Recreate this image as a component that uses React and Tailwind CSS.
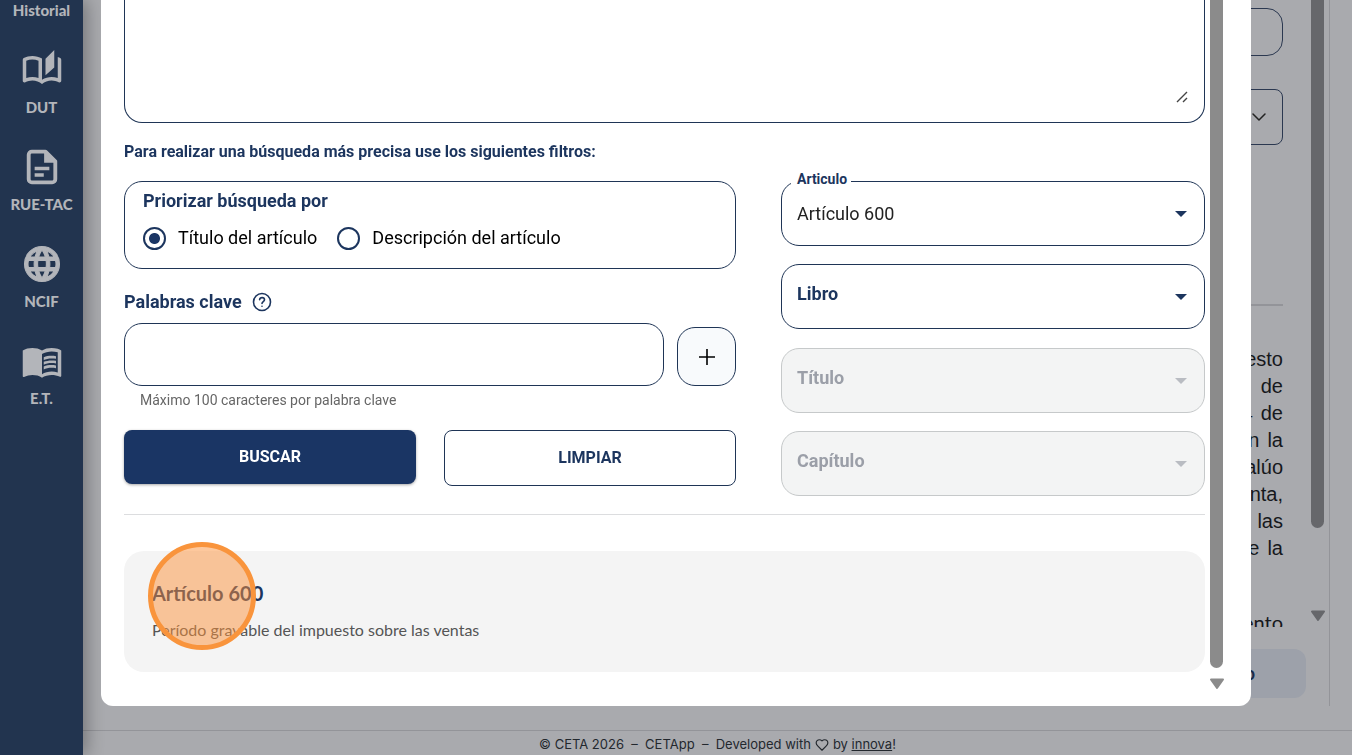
import { useState } from "react";
import { MdOutlineAutoStories, MdLanguage, MdMenuBook } from "react-icons/md";
import { LuChevronDown, LuHeart } from "react-icons/lu";

function FileIcon({ className }) {
  return (
    <svg viewBox="0 0 24 24" fill="none" className={className}>
      <path
        d="M14 3.2H6.2A1.8 1.8 0 0 0 4.4 5v14a1.8 1.8 0 0 0 1.8 1.8h11.6a1.8 1.8 0 0 0 1.8-1.8V8.8Z"
        stroke="currentColor"
        strokeWidth="2.2"
        strokeLinejoin="round"
      />
      <path d="M13.2 3v6.6h6.6Z" fill="currentColor" />
      <path d="M7.8 12.8h8.4M7.8 16.6h5.2" stroke="currentColor" strokeWidth="2" />
    </svg>
  );
}

function HelpIcon({ className }) {
  return (
    <svg
      viewBox="0 0 20 20"
      fill="none"
      stroke="currentColor"
      strokeWidth="1.6"
      strokeLinecap="round"
      strokeLinejoin="round"
      className={className}
    >
      <circle cx="10" cy="10" r="8.5" />
      <path d="M7.6 7.7c.2-1.4 1.2-2.1 2.5-2.1 1.4 0 2.4.8 2.4 2.1 0 1.8-2.5 1.900-2.5 3.800M10 14.200v.1" />
    </svg>
  );
}

const menu = [
  { name: "DUT", icon: MdOutlineAutoStories, iconClass: "size-[42px]" },
  { name: "RUE-TAC", icon: FileIcon, iconClass: "size-[42px]" },
  {
    name: "NCIF",
    icon: MdLanguage,
    iconClass: "size-[42px] [stroke-width:0.6] [&>path[fill=none]]:stroke-none",
  },
  { name: "E.T.", icon: MdMenuBook, iconClass: "size-[42px]" },
];

const articleLines = ["impuesto", "de", "4 de", "en la", "avalúo", "renta,", "las", "de la"];

function Sidebar() {
  return (
    <nav className="w-[83px] shrink-0 bg-[#22344f] text-[#b3b5ba] shadow-[4px_0_16px_rgba(0,0,0,0.3)] z-10">
      <ul className="flex flex-col gap-[29px] font-['Lato'] font-black text-[15px] leading-5 text-center">
        <li>
          <a href="#historial">Historial</a>
        </li>
        {menu.map((item) => (
          <li key={item.name}>
            <a href={`#${item.name}`} className="flex flex-col items-center gap-[6px]">
              <item.icon className={item.iconClass} />
              {item.name}
            </a>
          </li>
        ))}
      </ul>
    </nav>
  );
}

function ScrollTrack({ className, arrow }) {
  return (
    <div className="w-[23px] shrink-0 flex flex-col items-center" aria-hidden="true">
      <div className={className} />
      <svg viewBox="0 0 16 12" className={arrow}>
        <path
          d="M2 1.5h12L8 10Z"
          fill="currentColor"
          stroke="currentColor"
          strokeWidth="2"
          strokeLinejoin="round"
        />
      </svg>
    </div>
  );
}

function Background() {
  return (
    <main className="flex-1 flex flex-col min-w-0">
      <div className="flex-1 min-h-0 flex mr-[22px] mb-6 border-r border-[#939499]">
        <div className="flex-1 min-w-0 flex flex-col pt-2 pl-[46px]">
          <div className="flex flex-col items-end pr-[23px]">
            <input
              aria-label="Buscar"
              className="w-full h-12 rounded-2xl border border-[#2b3850]"
            />
            <button
              aria-label="Desplegar"
              className="mt-[33px] w-full h-14 rounded-lg border border-[#2b3850] flex items-center justify-end pr-[11px] text-[#222]"
            >
              <LuChevronDown className="size-6" strokeWidth={1.5} />
            </button>
            <hr className="mt-[159px] w-full border-t-2 border-[#939499]" />
            <div className="mt-10 font-['Liberation_Sans'] text-[20px] leading-[27px] text-[#16181c]">
              {articleLines.map((line) => (
                <p key={line} className="flex justify-end gap-2">
                  {line.split(" ").map((word) => (
                    <span key={word}>{word}</span>
                  ))}
                </p>
              ))}
            </div>
            <p className="mt-12 h-[17px] overflow-hidden font-['Lato'] text-[20px] leading-6 text-[#16181c]">
              ento
            </p>
          </div>
          <button className="mt-[22px] w-full h-[49px] rounded-xl bg-[#9da1aa] pr-[51px] text-right font-['Lato'] font-bold text-[18px] text-[#1b2b49]">
            o
          </button>
        </div>
        <ScrollTrack
          className="w-[13px] h-[528px] rounded-b-full bg-[#66676b]"
          arrow="w-4 h-3 mt-[82px] text-[#66676b]"
        />
      </div>
      <footer className="h-[25px] border-t border-[#939499] flex items-center justify-center gap-1 pt-[3px] font-['Inter'] text-[13px] text-[#23282e]">
        <span>© CETA 2026 &nbsp;–&nbsp; CETApp &nbsp;–&nbsp; Developed with</span>
        <LuHeart className="size-[14px]" />
        <span>
          by{" "}
          <a href="#innova" className="underline">
            innova
          </a>
          !
        </span>
      </footer>
    </main>
  );
}

function FilterSelect({ id, label, options = [], disabled }) {
  const [value, setValue] = useState(options[0] || "");

  return (
    <div className="relative h-[65px]">
      <select
        id={id}
        value={value}
        disabled={disabled}
        onChange={(e) => setValue(e.target.value)}
        className="appearance-none size-full rounded-[18px] border border-[#1f3556] pl-[15px] pr-10 text-[18px] text-[#222] opacity-100 disabled:border-[#c6c9ca] disabled:bg-[#f3f4f4]"
      >
        {options.length === 0 && <option value=""></option>}
        {options.map((option) => (
          <option key={option}>{option}</option>
        ))}
      </select>
      <label
        htmlFor={id}
        className={
          value
            ? "absolute left-[10px] -top-3 bg-white pl-[6px] pr-1 font-bold text-[14px] leading-5 text-[#1c355e]"
            : disabled
            ? "absolute left-4 top-[17px] font-bold text-[18px] leading-[26px] text-[#9b9fa8]"
            : "absolute left-4 top-[17px] font-bold text-[18px] leading-[26px] text-[#1c355e]"
        }
      >
        {label}
      </label>
      <svg
        viewBox="0 0 12 6"
        className={
          disabled
            ? "absolute right-[18px] top-[30px] w-3 h-[6px] text-[#b9bcc2]"
            : "absolute right-[18px] top-[30px] w-3 h-[6px] text-[#1c355e]"
        }
      >
        <path d="M0 0h12L6 6Z" fill="currentColor" />
      </svg>
    </div>
  );
}

function RadioOption({ value, label, selected, onChange }) {
  return (
    <label className="flex items-center gap-3 text-[18px] leading-6 text-black">
      <input
        type="radio"
        name="prioridad"
        value={value}
        checked={selected === value}
        onChange={() => onChange(value)}
        className="appearance-none size-[23px] rounded-full border-2 border-[#1c355e] checked:bg-[radial-gradient(circle,#1a3564_0_5px,transparent_6px)]"
      />
      {label}
    </label>
  );
}

function SearchModal() {
  const [priority, setPriority] = useState("titulo");
  const [keyword, setKeyword] = useState("");

  return (
    <div className="fixed inset-0 z-20 flex justify-center px-4 pb-[49px]">
      <div
        role="dialog"
        className="w-full max-w-[1150px] flex bg-white rounded-b-xl px-[23px] font-['Roboto'] overflow-hidden"
      >
        <div className="flex-1 min-w-0 flex flex-col">
          <div className="relative h-[123px]">
            <textarea
              aria-label="Consulta"
              className="block size-full resize-none rounded-b-[18px] border border-t-0 border-[#1f3556] p-4"
            />
            <svg
              viewBox="0 0 12 12"
              className="absolute right-[17px] bottom-5 size-3 text-[#444]"
              stroke="currentColor"
              strokeWidth="1.4"
            >
              <path d="M1 11 11 1M7 11l4-4" />
            </svg>
          </div>
          <p className="mt-[17px] font-bold text-[16px] leading-6 text-[#1c355e]">
            Para realizar una búsqueda más precisa use los siguientes filtros:
          </p>

          <div className="mt-[17px] grid grid-cols-[612fr_424fr] gap-[45px]">
            <div className="pb-[10px]">
              <fieldset className="h-[88px] rounded-[18px] border border-[#1f3556] px-[18px] pt-[7px]">
                <legend className="float-left w-full font-bold text-[18px] leading-6 text-[#1c355e]">
                  Priorizar búsqueda por
                </legend>
                <div className="clear-both pt-[13px] flex gap-5">
                  <RadioOption
                    value="titulo"
                    label="Título del artículo"
                    selected={priority}
                    onChange={setPriority}
                  />
                  <RadioOption
                    value="descripcion"
                    label="Descripción del artículo"
                    selected={priority}
                    onChange={setPriority}
                  />
                </div>
              </fieldset>

              <div className="mt-5 h-[26px] flex items-center gap-[10px] text-[#1c355e]">
                <label htmlFor="keyword" className="font-bold text-[18px] leading-6">
                  Palabras clave
                </label>
                <HelpIcon className="size-5" />
              </div>
              <div className="mt-2 flex items-end gap-[13px]">
                <input
                  id="keyword"
                  maxLength={100}
                  value={keyword}
                  onChange={(e) => setKeyword(e.target.value)}
                  className="flex-1 min-w-0 h-[63px] rounded-[18px] border border-[#1f3556] px-4 text-[18px]"
                />
                <button
                  aria-label="Agregar"
                  className="size-[59px] rounded-[18px] border border-[#1f3556] bg-[#f8fafc] flex items-center justify-center text-black"
                >
                  <svg viewBox="0 0 16 16" className="size-4" stroke="currentColor" strokeWidth="1.6">
                    <path d="M8 0v16M0 8h16" />
                  </svg>
                </button>
              </div>
              <p className="mt-1 pl-4 text-[14px] leading-5 text-[#666]">
                Máximo 100 caracteres por palabra clave
              </p>
              <div className="mt-5 grid grid-cols-2 items-start gap-7 font-bold text-[16px]">
                <button className="h-[54px] rounded-lg bg-[#1a3564] text-white shadow-[0_1px_3px_rgba(0,0,0,0.35)]">
                  BUSCAR
                </button>
                <button className="h-14 rounded-lg border border-[#1f3556] text-[#1c355e]">
                  LIMPIAR
                </button>
              </div>
            </div>

            <div className="flex flex-col justify-between">
              <FilterSelect id="articulo" label="Articulo" options={["Artículo 600"]} />
              <FilterSelect id="libro" label="Libro" />
              <FilterSelect id="titulo" label="Título" disabled />
              <FilterSelect id="capitulo" label="Capítulo" disabled />
            </div>
          </div>

          <hr className="mt-[18px] border-[#dcdddf]" />

          <article className="relative mt-9 h-[121px] rounded-[20px] bg-[#f4f4f4] px-7 pt-[30px] font-['Lato']">
            <h3 className="font-bold text-[20px] leading-6 text-[#1c355e]">Artículo 600</h3>
            <p className="mt-[13px] text-[16px] leading-6 text-[#555]">
              Período gravable del impuesto sobre las ventas
            </p>
            {/* click marker */}
            <span className="absolute left-6 -top-[9px] size-[108px] rounded-full border-[5px] border-[#f9943c] bg-[#fb923c]/50" />
          </article>
        </div>
        <ScrollTrack
          className="w-[13px] h-[668px] rounded-b-full bg-[#8b8b8b]"
          arrow="w-4 h-3 mt-[10px] text-[#8b8b8b]"
        />
      </div>
    </div>
  );
}

export default function App() {
  return (
    <div className="h-screen flex overflow-hidden bg-[#a9aaae]">
      <Sidebar />
      <Background />
      <SearchModal />
    </div>
  );
}
